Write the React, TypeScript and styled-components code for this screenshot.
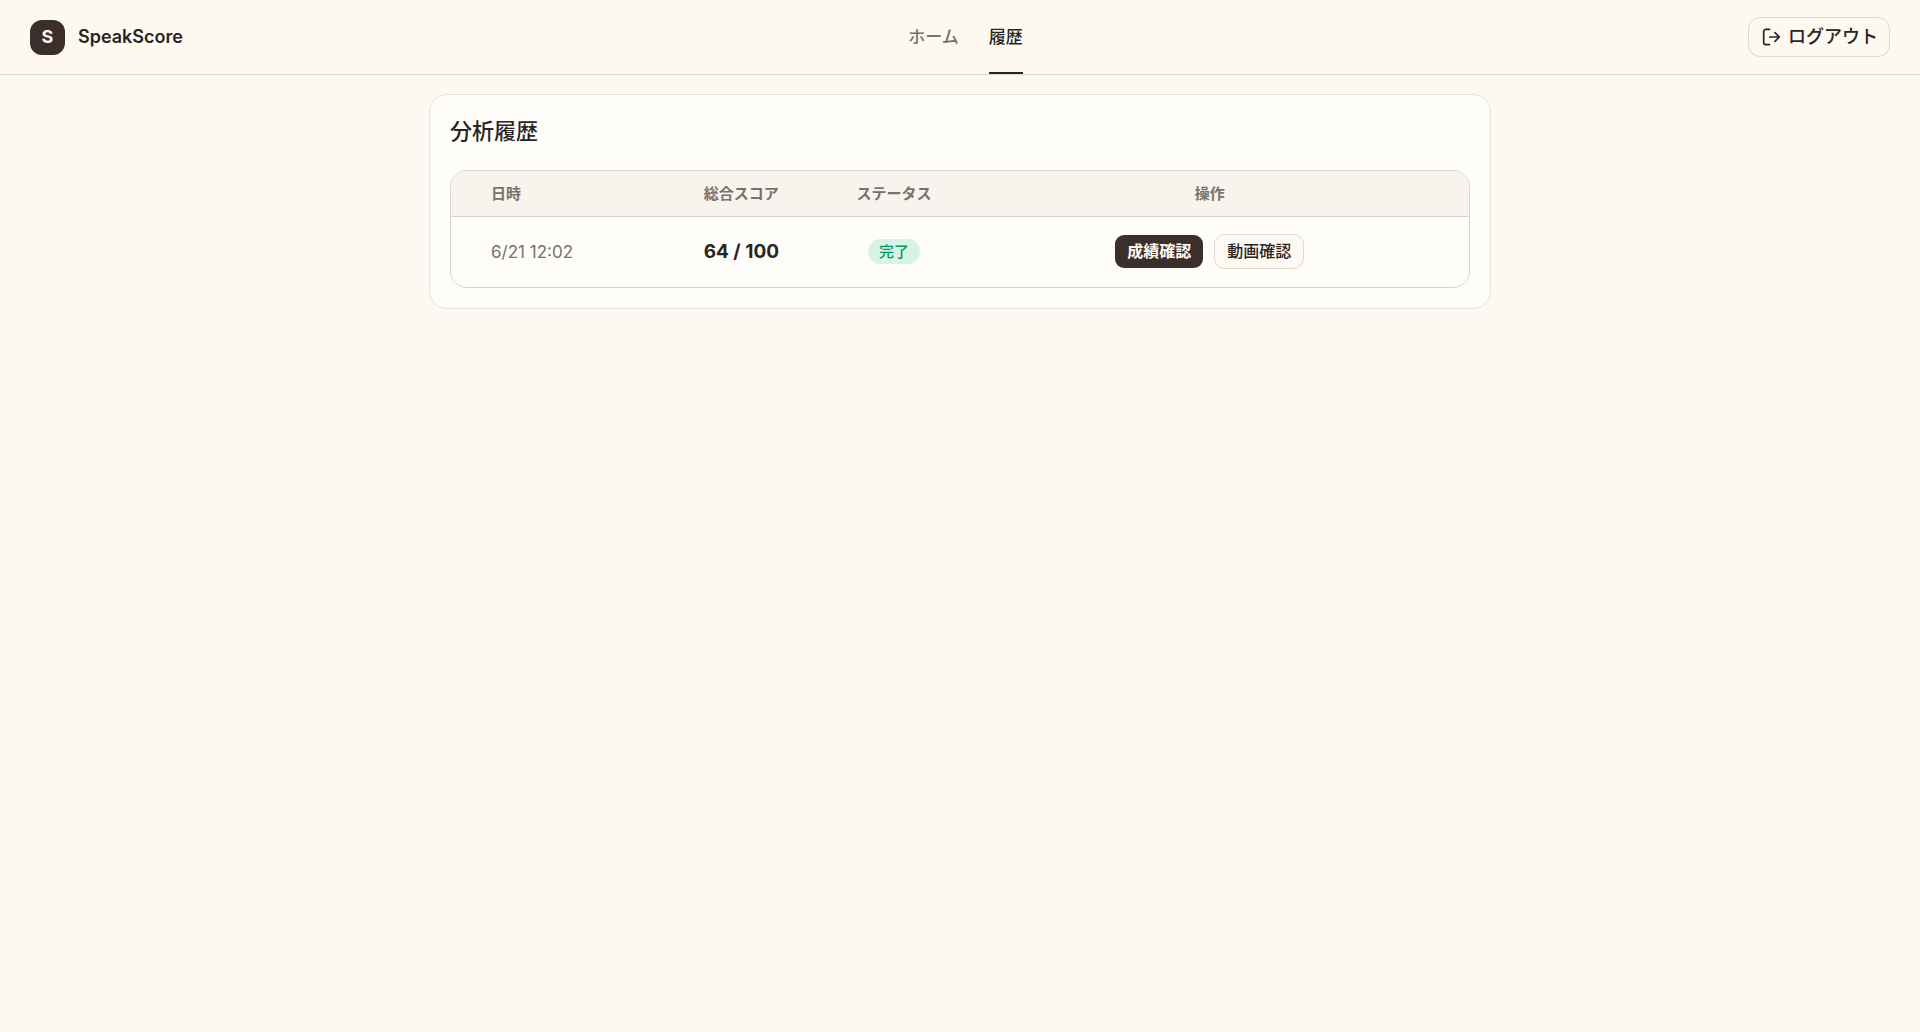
import React from "react";
import styled, { createGlobalStyle, css } from "styled-components";

const GlobalStyle = createGlobalStyle`
  *, *::before, *::after { box-sizing: border-box; }
  body {
    margin: 0;
    background: #fdf8f2;
    color: #292524;
    font-family: Inter, "Noto Sans CJK JP", sans-serif;
    font-size: 18px;
    line-height: 24px;
  }
`;

const Header = styled.header`
  display: flex;
  justify-content: space-between;
  height: 75px;
  padding: 0 30px;
  background: #fef9f0;
  border-bottom: 1px solid #ddd8cb;
`;

const Brand = styled.a`
  display: flex;
  align-items: center;
  gap: 13px;
  color: inherit;
  font-size: 18px;
  font-weight: 600;
  text-decoration: none;
`;

const Logo = styled.span`
  display: grid;
  place-items: center;
  width: 35px;
  height: 35px;
  border-radius: 12px;
  background: #3b2f2b;
  color: #fef9f0;
  font-size: 18px;
  font-weight: 700;
`;

const Nav = styled.nav`
  display: flex;
  gap: 30px;
`;

const NavLink = styled.a<{ $active?: boolean }>`
  display: flex;
  align-items: center;
  border-top: 2px solid transparent;
  border-bottom: 2px solid ${(p) => (p.$active ? "#292524" : "transparent")};
  color: ${(p) => (p.$active ? "#292524" : "#78716c")};
  font-size: 17px;
  font-weight: 500;
  text-decoration: none;
`;

const LogoutButton = styled.button`
  display: flex;
  align-items: center;
  align-self: center;
  gap: 8px;
  height: 40px;
  padding: 0 11px;
  border: 1px solid #ddd8cb;
  border-radius: 12px;
  background: #fef9f0;
  color: #292524;
  font: inherit;
  font-weight: 500;
  cursor: pointer;
`;

const Main = styled.main`
  max-width: 1102px;
  margin: 0 auto;
  padding: 19px 20px;
`;

const Card = styled.section`
  padding: 20px;
  border: 1px solid #e9e2d9;
  border-radius: 18px;
  background: #fffdf9;
`;

const Title = styled.h1`
  margin: 0 0 22px;
  font-size: 22px;
  font-weight: 500;
  line-height: 33px;
`;

const TableFrame = styled.div`
  overflow: hidden;
  border: 1px solid #dad5cf;
  border-radius: 17px;
`;

const Table = styled.table`
  width: 100%;
  table-layout: fixed;
  border-collapse: separate;
  border-spacing: 0;
`;

const Col = styled.col<{ $width: string }>`
  width: ${(p) => p.$width};
`;

const cell = css`
  padding: 0;
  text-align: center;
  vertical-align: middle;
  &:first-child {
    padding-left: 40px;
    text-align: left;
  }
  &:last-child {
    padding-right: 20px;
  }
`;

const HeadCell = styled.th`
  ${cell}
  height: 46px;
  border-bottom: 1px solid #dad5cf;
  background: #f7f3ed;
  color: #78716c;
  font-size: 15px;
  font-weight: 600;
`;

const Cell = styled.td`
  ${cell}
  height: 70px;
`;

const DateText = styled.time`
  color: #78716c;
  font-size: 17px;
`;

const Score = styled.strong`
  font-size: 19px;
  font-weight: 700;
`;

const Badge = styled.span`
  display: block;
  width: fit-content;
  margin: 0 auto 2px;
  padding: 0 11px;
  border-radius: 13px;
  background: #d8f3e6;
  color: #059669;
  font-size: 15px;
  font-weight: 500;
  line-height: 25px;
`;

const Actions = styled.div`
  display: flex;
  align-items: center;
  justify-content: center;
  gap: 11px;
  padding-bottom: 2px;
`;

const ActionButton = styled.button<{ $primary?: boolean }>`
  height: ${(p) => (p.$primary ? 33 : 35)}px;
  padding: 0 12px 2px;
  border: ${(p) => (p.$primary ? "0" : "1px solid #e0d9d0")};
  border-radius: ${(p) => (p.$primary ? 9 : 10)}px;
  background: ${(p) => (p.$primary ? "#3b2f2b" : "#fef9f2")};
  color: ${(p) => (p.$primary ? "#fef9f0" : "#292524")};
  font-family: inherit;
  font-size: 16px;
  font-weight: ${(p) => (p.$primary ? 600 : 500)};
  cursor: pointer;
`;

const LogoutIcon = () => (
  <svg width="20" height="20" viewBox="0 0 20 20" fill="none" stroke="currentColor" strokeWidth="1.7" strokeLinecap="round" strokeLinejoin="round" aria-hidden="true">
    <path d="M9.5 2.4H5.7a2 2 0 0 0-2 2v11.2a2 2 0 0 0 2 2h3.8" />
    <path d="M9.7 10h9.6M15 5.7 19.3 10 15 14.3" />
  </svg>
);

const records = [{ date: "6/21 12:02", score: 64, status: "完了" }];

export default function App() {
  return (
    <>
      <GlobalStyle />
      <Header>
        <Brand href="#home">
          <Logo>S</Logo>
          SpeakScore
        </Brand>
        <Nav>
          <NavLink href="#home">ホーム</NavLink>
          <NavLink href="#history" $active aria-current="page">履歴</NavLink>
        </Nav>
        <LogoutButton type="button">
          <LogoutIcon />
          ログアウト
        </LogoutButton>
      </Header>
      <Main>
        <Card>
          <Title>分析履歴</Title>
          <TableFrame>
            <Table>
              <colgroup>
                <Col $width="214px" />
                <Col $width="15%" />
                <Col $width="15%" />
                <Col $width="auto" />
              </colgroup>
              <thead>
                <tr>
                  <HeadCell scope="col">日時</HeadCell>
                  <HeadCell scope="col">総合スコア</HeadCell>
                  <HeadCell scope="col">ステータス</HeadCell>
                  <HeadCell scope="col">操作</HeadCell>
                </tr>
              </thead>
              <tbody>
                {records.map((r) => (
                  <tr key={r.date}>
                    <Cell><DateText>{r.date}</DateText></Cell>
                    <Cell><Score>{r.score} / 100</Score></Cell>
                    <Cell><Badge>{r.status}</Badge></Cell>
                    <Cell>
                      <Actions>
                        <ActionButton type="button" $primary>成績確認</ActionButton>
                        <ActionButton type="button">動画確認</ActionButton>
                      </Actions>
                    </Cell>
                  </tr>
                ))}
              </tbody>
            </Table>
          </TableFrame>
        </Card>
      </Main>
    </>
  );
}
